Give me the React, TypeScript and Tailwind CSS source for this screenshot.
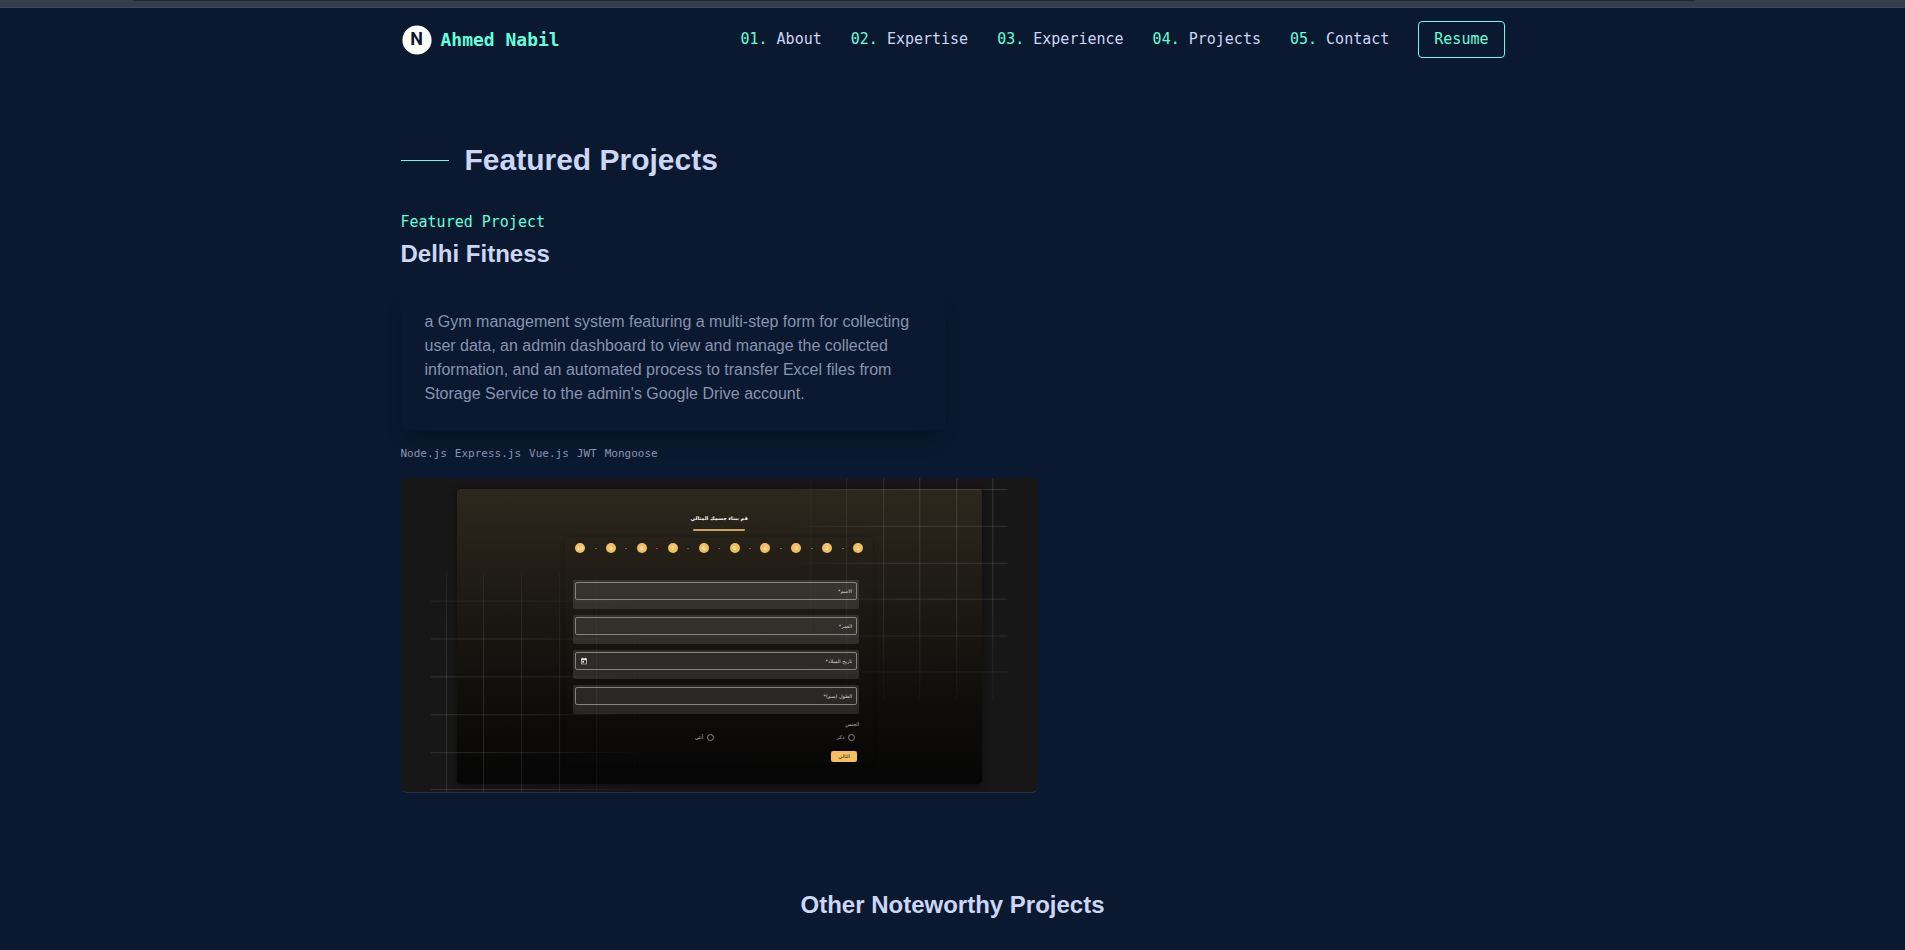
import React from "react";

const mono = "font-['DejaVu_Sans_Mono',monospace]";

const navItems = [
  { label: "About", href: "#about" },
  { label: "Expertise", href: "#expertise" },
  { label: "Experience", href: "#experience" },
  { label: "Projects", href: "#projects" },
  { label: "Contact", href: "#contact" },
];

const tags = ["Node.js", "Express.js", "Vue.js", "JWT", "Mongoose"];

const fields = [
  { id: "name", label: "الاسم*" },
  { id: "age", label: "العمر*" },
  { id: "birth", label: "تاريخ الميلاد*", date: true },
  { id: "height", label: "الطول (سم)*" },
];

const steps = [10, 9, 8, 7, 6, 5, 4, 3, 2, 1];

function Logo() {
  return (
    <svg viewBox="0 0 32 32" className="size-8" aria-hidden="true">
      <circle cx="16" cy="16" r="14.6" fill="#fff" />
      <text
        x="15.6"
        y="21.2"
        textAnchor="middle"
        fontFamily="Roboto, sans-serif"
        fontWeight="700"
        fontSize="18"
        fill="#0a192f"
      >
        N
      </text>
    </svg>
  );
}

function Header() {
  return (
    <header className="mx-auto flex h-[63px] w-full max-w-6xl items-center justify-between px-6">
      <a href="#home" className="flex items-center gap-2">
        <Logo />
        <span className={`${mono} text-lg font-bold text-[#64ffda]`}>Ahmed Nabil</span>
      </a>
      <nav className={`${mono} flex items-center gap-[29px] text-[15px]`}>
        {navItems.map((item, i) => (
          <a key={item.label} href={item.href} className="whitespace-nowrap text-[#ccd6f6]">
            <span className="text-[#64ffda]">0{i + 1}. </span>
            {item.label}
          </a>
        ))}
        <a
          href="#resume"
          className="flex h-[37px] items-center rounded border border-[#64ffda] px-[15px] text-[#64ffda]"
        >
          Resume
        </a>
      </nav>
    </header>
  );
}

function GridLines() {
  return (
    <svg
      viewBox="0 0 637 315"
      preserveAspectRatio="none"
      className="pointer-events-none absolute inset-0 size-full"
      aria-hidden="true"
    >
      <defs>
        <linearGradient id="fadeRight" gradientUnits="userSpaceOnUse" x1="30" y1="0" x2="250" y2="0">
          <stop offset="0" stopColor="#fff" stopOpacity="0.12" />
          <stop offset="0.45" stopColor="#fff" stopOpacity="0.1" />
          <stop offset="1" stopColor="#fff" stopOpacity="0" />
        </linearGradient>
        <linearGradient id="fadeLeft" gradientUnits="userSpaceOnUse" x1="606" y1="0" x2="385" y2="0">
          <stop offset="0" stopColor="#fff" stopOpacity="0.13" />
          <stop offset="0.5" stopColor="#fff" stopOpacity="0.12" />
          <stop offset="1" stopColor="#fff" stopOpacity="0" />
        </linearGradient>
        <linearGradient id="fadeUp" gradientUnits="userSpaceOnUse" x1="0" y1="315" x2="0" y2="90">
          <stop offset="0" stopColor="#fff" />
          <stop offset="0.6" stopColor="#fff" />
          <stop offset="1" stopColor="#555" />
        </linearGradient>
        <linearGradient id="fadeDown" gradientUnits="userSpaceOnUse" x1="0" y1="0" x2="0" y2="226">
          <stop offset="0" stopColor="#fff" />
          <stop offset="0.6" stopColor="#ddd" />
          <stop offset="1" stopColor="#333" />
        </linearGradient>
        <mask id="lowerMask">
          <rect width="637" height="315" fill="url(#fadeUp)" />
        </mask>
        <mask id="upperMask">
          <rect width="637" height="315" fill="url(#fadeDown)" />
        </mask>
      </defs>
      <g fill="url(#fadeRight)" mask="url(#lowerMask)">
        {[45, 82, 120, 158, 195, 233].map((x) => (
          <rect key={x} x={x} y="95" width="1" height="220" />
        ))}
        {[123, 161, 199, 237, 275, 312].map((y) => (
          <rect key={y} x="30" y={y} width="220" height="1" />
        ))}
      </g>
      <g fill="url(#fadeLeft)" mask="url(#upperMask)">
        {[409, 445, 482, 518, 555, 591].map((x) => (
          <rect key={x} x={x} y="0" width="1" height="223" />
        ))}
        {[11, 48, 85, 121, 158, 194].map((y) => (
          <rect key={y} x="385" y={y} width="221" height="1" />
        ))}
      </g>
    </svg>
  );
}

function CalendarIcon() {
  return (
    <svg viewBox="0 0 24 24" className="size-[8px]" fill="#e6e4e0" aria-hidden="true">
      <path d="M19 4h-1V2h-2v2H8V2H6v2H5a2 2 0 0 0-2 2v14a2 2 0 0 0 2 2h14a2 2 0 0 0 2-2V6a2 2 0 0 0-2-2zm0 16H5V10h14v10zM7 12h5v5H7z" />
    </svg>
  );
}

function FormPreview() {
  return (
    <div className="relative overflow-hidden rounded-md border-b border-[#263240] bg-[#171717] px-14 pt-[11px] pb-[8px] font-['DejaVu_Sans',sans-serif]">
      <div className="flex h-[295px] flex-col items-center rounded-sm bg-linear-to-b from-[#2d281d] via-[#1a1712] via-45% to-[#060606] pt-[22px] shadow-[0_1px_6px_2px_rgba(0,0,0,0.3)]">
        <p dir="rtl" className="h-4 text-[5px] leading-[14px] font-bold whitespace-nowrap text-white">
          قم ببناء جسمك المثالي
        </p>
        <div className="mt-[2px] h-[2px] w-[52px] rounded-sm bg-[#cda24f]" />
        <div className="mt-[6px] flex h-[228px] w-[308px] flex-col rounded-sm px-2 pt-[6px] shadow-[0_0_4px_rgba(0,0,0,0.25)]">
          <ol className="ml-[2px] flex w-[288px] items-center justify-between">
            {steps.map((n) => (
              <React.Fragment key={n}>
                <li className="flex size-[10px] items-center justify-center rounded-full bg-[#f3bd60] text-[5px] leading-none text-white">
                  {n}
                </li>
                {n > 1 && <li aria-hidden="true" className="h-px w-[2px] bg-[#6f6439]" />}
              </React.Fragment>
            ))}
          </ol>
          <div className="mt-[27px] flex flex-col gap-[6px]">
            {fields.map((f) => (
              <div key={f.id} className="h-[29px] w-[286px] rounded-xs bg-white/11 px-[2px] pt-[2px]">
                <div
                  dir="rtl"
                  className="flex h-[18px] items-center gap-1 rounded-xs border border-[#85837f] px-[4px]"
                >
                  <label htmlFor={f.id} className="text-[5px] leading-none whitespace-nowrap text-[#d6d4d0]">
                    {f.label}
                  </label>
                  <input id={f.id} className="h-3 min-w-0 flex-1 bg-transparent text-[6px] text-white outline-none" />
                  {f.date && <CalendarIcon />}
                </div>
              </div>
            ))}
          </div>
          <fieldset dir="rtl" className="mt-[6px] w-[286px] text-[5px] leading-none text-[#bdbbb8]">
            <legend className="h-[8px] leading-[8px]">الجنس</legend>
            <div className="mt-[6px] grid grid-cols-2 pr-[4px]">
              {["ذكر", "أنثى"].map((g) => (
                <label key={g} className="flex items-center gap-[4px]">
                  <input
                    type="radio"
                    name="gender"
                    className="size-[7px] appearance-none rounded-full border border-[#85837f]"
                  />
                  {g}
                </label>
              ))}
            </div>
          </fieldset>
          <button
            type="button"
            className="mt-[10px] ml-[258px] flex h-[11px] w-[26px] items-center justify-center rounded-xs bg-[#f3bd60] text-[5px] leading-none text-[#2b2210]"
          >
            التالي
          </button>
        </div>
      </div>
      <GridLines />
    </div>
  );
}

export default function App() {
  return (
    <div className="min-h-screen bg-[#0a192f] font-['Liberation_Sans',Arial,sans-serif]">
      <div className="h-2 border-b border-[#3e4a56] bg-[#323e4e]">
        <div className="mr-[11%] ml-[7%] h-px bg-[#1c2838]" />
      </div>
      <Header />
      <main className="mx-auto w-full max-w-6xl px-6 pt-[71px]">
        <section id="projects">
          <div className="flex items-center gap-4">
            <span className="h-px w-12 bg-[#64ffda]" />
            <h2 className="text-3xl font-bold text-[#ccd6f6]">Featured Projects</h2>
          </div>
          <article className="mt-8 grid grid-cols-12 gap-x-4">
            <div className="col-span-12">
              <p className={`${mono} text-[15px] leading-6 text-[#64ffda]`}>Featured Project</p>
              <h3 className="mt-1 text-2xl font-bold text-[#ccd6f6]">Delhi Fitness</h3>
            </div>
            <p className="col-span-6 mt-4 rounded bg-[#0a192f] p-6 text-base text-[#8892b0] shadow-[0_14px_20px_-10px_rgba(2,12,20,0.45)]">
              a Gym management system featuring a multi-step form for collecting user data, an admin
              dashboard to view and manage the collected information, and an automated process to
              transfer Excel files from Storage Service to the admin's Google Drive account.
            </p>
            <ul className={`${mono} col-span-12 my-4 flex gap-2 text-[11px] leading-4 text-[#8892b0]`}>
              {tags.map((t) => (
                <li key={t}>{t}</li>
              ))}
            </ul>
            <div className="col-span-7">
              <FormPreview />
            </div>
          </article>
        </section>
        <h2 className="mt-24 text-center text-2xl font-bold text-[#ccd6f6]">Other Noteworthy Projects</h2>
      </main>
    </div>
  );
}
